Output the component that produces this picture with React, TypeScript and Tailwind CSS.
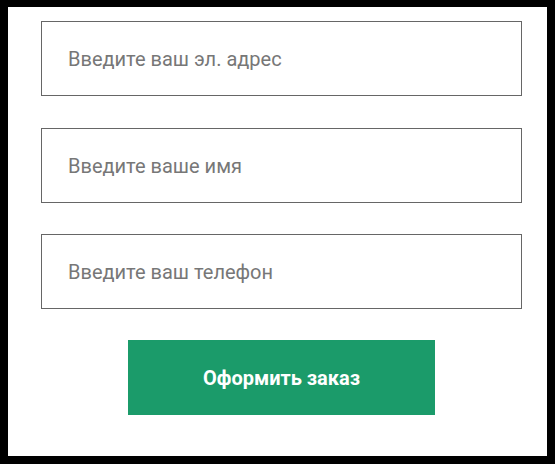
export default function App() {
  return (
    <div className="h-[464px] w-[555px] bg-black pb-2 pl-2 pr-2 pt-[7px] font-['Roboto',sans-serif]">
      <div className="flex h-full flex-col bg-white pl-[33px] pr-[25px] pt-[14px]">
        <input
          type="email"
          placeholder="Введите ваш эл. адрес"
          className="h-[75px] w-full border border-[#666] bg-white px-[26px] text-[20px] text-[#333] outline-none placeholder:text-[#777]"
        />
        <input
          type="text"
          placeholder="Введите ваше имя"
          className="mt-[32px] h-[75px] w-full border border-[#666] bg-white px-[26px] text-[20px] text-[#333] outline-none placeholder:text-[#777]"
        />
        <input
          type="tel"
          placeholder="Введите ваш телефон"
          className="mt-[31px] h-[75px] w-full border border-[#666] bg-white px-[26px] text-[20px] text-[#333] outline-none placeholder:text-[#777]"
        />
        <div className="mt-[31px] flex justify-center">
          <button
            type="button"
            className="h-[75px] w-[307px] bg-[#1b9b6a] text-[20px] font-bold text-white"
          >
            Оформить заказ
          </button>
        </div>
      </div>
    </div>
  );
}
